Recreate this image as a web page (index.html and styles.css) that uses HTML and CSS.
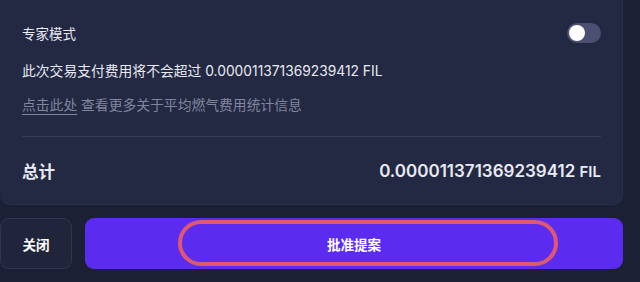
FILE: index.html
```html
<!DOCTYPE html>
<html lang="zh-CN">
<head>
    <meta charset="UTF-8">
    <meta name="viewport" content="width=device-width, initial-scale=1.0">
    <title>批准提案</title>
    <link rel="stylesheet" href="styles.css">
</head>
<body>
    <div class="card">
        <div class="row-head">
            <span>专家模式</span>
            <span class="toggle"><span class="knob"></span></span>
        </div>
        <div class="fee-line">此次交易支付费用将不会超过 0.000011371369239412 FIL</div>
        <div class="stats-line"><a class="link">点击此处</a> 查看更多关于平均燃气费用统计信息</div>
        <div class="divider"></div>
        <div class="total-row">
            <span class="total-label">总计</span>
            <span class="total-amount">0.000011371369239412 <small>FIL</small></span>
        </div>
    </div>

    <div class="actions">
        <button class="btn-close">关闭</button>
        <button class="btn-approve">
            批准提案
            <span class="highlight"></span>
        </button>
    </div>
</body>
</html>
```

FILE: styles.css
```css
body {
    margin: 0;
    background: #1c2035;
    font-family: Inter, "Noto Sans CJK SC", sans-serif;
    color: #e8eaf2;
    width: 640px;
    height: 282px;
    overflow: hidden;
}

.card {
    width: 623px;
    box-sizing: border-box;
    padding: 22px 21px 0 22px;
    background: #232843;
    border: 1px solid #2a304c;
    border-top: none;
    border-left: none;
    border-radius: 0 0 10px 10px;
    font-size: 13.8px;
}

.row-head {
    height: 21px;
    display: flex;
    justify-content: space-between;
    align-items: center;
}

.row-head > span:first-child {
    font-size: 13.5px;
}

.toggle {
    width: 34px;
    height: 20px;
    border-radius: 10px;
    background: #4b5072;
    display: flex;
    align-items: center;
    padding-left: 2px;
    box-sizing: border-box;
}

.knob {
    width: 16px;
    height: 16px;
    border-radius: 50%;
    background: #fff;
}

.fee-line {
    margin-top: 18px;
    line-height: 20px;
}

.stats-line {
    margin-top: 14px;
    line-height: 20px;
    color: #80869e;
}

.link {
    text-decoration: underline;
    text-underline-offset: 4px;
}

.divider {
    margin-top: 21px;
    height: 1px;
    background: #353b57;
}

.total-row {
    height: 67px;
    display: flex;
    justify-content: space-between;
    align-items: center;
}

.total-label {
    font-size: 16.5px;
    font-weight: bold;
}

.total-amount {
    font-size: 17px;
    font-weight: 600;
}

.total-amount small {
    font-size: 15px;
}

.actions {
    margin-top: 13px;
    display: flex;
    gap: 13px;
    width: 623px;
}

.actions button {
    height: 51px;
    border-radius: 9px;
    font-family: Inter, "Noto Sans CJK SC", sans-serif;
    font-size: 13.5px;
    font-weight: bold;
    color: #fff;
    cursor: pointer;
}

.btn-close {
    width: 72px;
    background: #20253b;
    border: 1px solid #2f3553;
    color: #e8eaf2;
}

.btn-approve {
    flex: 1;
    position: relative;
    background: #5b2cf0;
    border: none;
}

.highlight {
    position: absolute;
    left: 93px;
    top: 2px;
    width: 380px;
    height: 46px;
    box-sizing: border-box;
    border: 4px solid #e0586f;
    border-radius: 23px;
}
```
